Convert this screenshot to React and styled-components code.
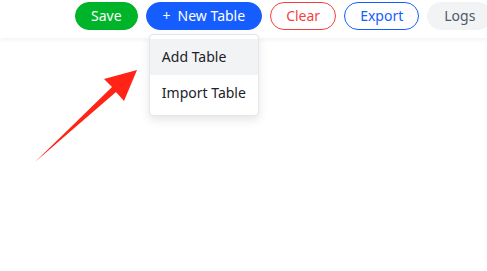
import React from 'react';
import styled, { createGlobalStyle } from 'styled-components';

const GlobalStyle = createGlobalStyle`
  html, body {
    margin: 0;
    padding: 0;
    background: #ffffff;
    font-family: "Noto Sans", "Open Sans", Arial, sans-serif;
  }
`;

const Page = styled.div`
  position: relative;
  width: 487px;
  height: 271px;
  overflow: hidden;
  background: #fff;
`;

const Toolbar = styled.div`
  display: flex;
  align-items: flex-start;
  gap: 8px;
  height: 38px;
  padding: 2px 0 0 75px;
  box-sizing: border-box;
  box-shadow: 0 2px 4px rgba(0, 0, 0, 0.05);
  white-space: nowrap;
`;

const COLORS = {
  success: { bg: '#00b42a', fg: '#fff', border: '#00b42a' },
  primary: { bg: '#165dff', fg: '#fff', border: '#165dff' },
  danger: { bg: '#fff', fg: '#f53f3f', border: '#f53f3f' },
  outline: { bg: '#fff', fg: '#165dff', border: '#165dff' },
  secondary: { bg: '#f2f3f5', fg: '#4e5969', border: '#f2f3f5' },
};

const Button = styled.button`
  flex: none;
  height: 28px;
  padding: 0 ${props => (props.$wide ? 16 : 15)}px;
  border-radius: 14px;
  border: 1px solid ${props => COLORS[props.$kind].border};
  background: ${props => COLORS[props.$kind].bg};
  color: ${props => COLORS[props.$kind].fg};
  font-family: inherit;
  font-size: 14px;
  line-height: 26px;
  cursor: pointer;
`;

const Plus = styled.span`
  margin-right: 7px;
`;

const MenuAnchor = styled.div`
  position: relative;
  flex: none;
`;

const Menu = styled.div`
  position: absolute;
  top: 32px;
  left: 50%;
  transform: translateX(-50%);
  width: 110px;
  box-sizing: border-box;
  padding: 4px 0;
  background: #fff;
  border: 1px solid #e5e6eb;
  border-radius: 4px;
  box-shadow: 0 4px 10px rgba(0, 0, 0, 0.1);
  z-index: 2;
`;

const MenuItem = styled.div`
  height: 36px;
  line-height: 36px;
  padding: 0 12px;
  font-size: 14px;
  color: #1d2129;
  background: ${props => (props.$active ? '#f2f3f5' : 'transparent')};
`;

const Arrow = styled.svg`
  position: absolute;
  left: 0;
  top: 0;
  pointer-events: none;
`;

const App = () => {
  return (
    <Page>
      <GlobalStyle />
      <Toolbar>
        <Button $kind="success">Save</Button>
        <MenuAnchor>
          <Button $kind="primary" $wide><Plus>+</Plus>New Table</Button>
          <Menu>
            <MenuItem $active>Add Table</MenuItem>
            <MenuItem>Import Table</MenuItem>
          </Menu>
        </MenuAnchor>
        <Button $kind="danger">Clear</Button>
        <Button $kind="outline">Export</Button>
        <Button $kind="secondary" $wide>Logs</Button>
      </Toolbar>
      <Arrow width="487" height="271" viewBox="0 0 487 271">
        <path
          d="M35 162 L116 92 L124 101 L137 70 L104 79 L112 87 Z"
          fill="#ff2416"
        />
      </Arrow>
    </Page>
  );
};

export default App;
